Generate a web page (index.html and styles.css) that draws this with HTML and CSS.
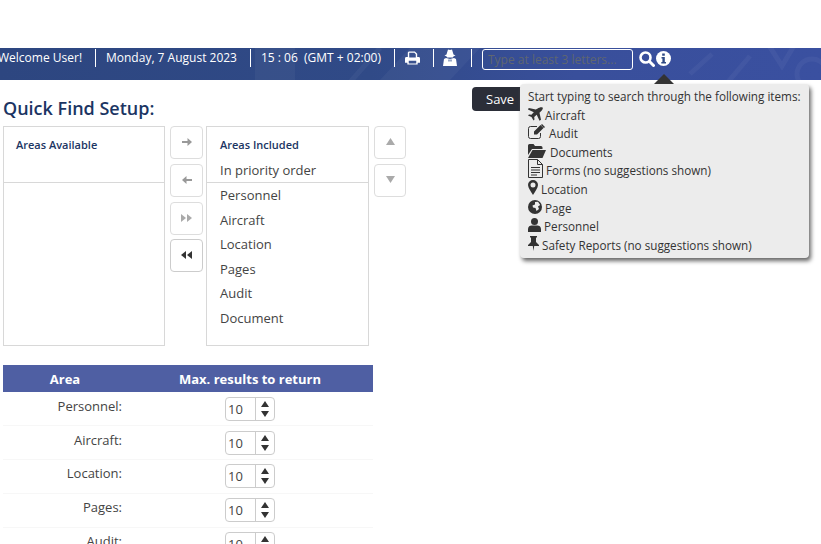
FILE: index.html
```html
<!DOCTYPE html>
<html lang="en">
<head>
<meta charset="utf-8">
<title>Quick Find Setup</title>
<link rel="stylesheet" href="styles.css">
</head>
<body>
<header class="topbar">
  <svg class="bar-art" width="821" height="32" viewBox="0 0 821 32"><g fill="none" stroke="#fff" stroke-opacity=".045" stroke-width="5"><path d="M380 0 345 40"/><path d="M690 26 712 6"/><path d="M728 34 750 8"/><path d="M768 -4 782 18 795 -4"/><circle cx="812" cy="26" r="15"/></g><path fill="#fff" fill-opacity=".04" d="M410 0h70l-30 32h-70zM255 0h40v32h-40z"/></svg>
  <span class="bar-item bar-welcome">Welcome User!</span>
  <span class="bar-item bar-date">Monday, 7 August 2023</span>
  <span class="bar-item bar-time">15 : 06&nbsp; (GMT + 02:00)</span>
  <span class="bar-item bar-icon">
    <svg width="16" height="14" viewBox="0 0 16 14"><path fill="#fff" fill-rule="evenodd" d="M4 0h6.500L13 2.500V6h1.500A1.500 1.500 0 0 1 16 7.500V12h-2.500v2h-11v-2H0V7.500A1.500 1.500 0 0 1 1.500 6H3V1zM4.500 1.500V6.500h7V3L10 1.500zM4 10v2.800h8V10z"/></svg>
  </span>
  <span class="bar-item bar-icon bar-spy">
    <svg width="14" height="17" viewBox="0 0 14 17"><path fill="#fff" d="M5 .5 7 1l2-.5 1.500 5 2 1-1.800.8-1 1.200H4.300l-1-1.200L1.500 6.500l2-1zM3 9l4 1 4-1 2 1 1 7H0l1-7z"/><path fill="#34508c" d="M5.500 10.500h1v1.500l-.5 1-.5-1zM7.500 10.500h1V12l-.5 1-.5-1z"/></svg>
  </span>
  <input class="search" type="text" placeholder="Type at least 3 letters...">
  <svg class="search-icon" width="16" height="16" viewBox="0 0 16 16"><circle cx="6.500" cy="6.500" r="5" fill="none" stroke="#fff" stroke-width="2.600"/><path stroke="#fff" stroke-width="3" stroke-linecap="round" d="M10.500 10.500 14.500 14.500"/></svg>
  <svg class="info-icon" width="15" height="15" viewBox="0 0 15 15"><circle cx="7.500" cy="7.500" r="7.500" fill="#fff"/><path fill="#2f4a85" d="M6.200 2.500h2.600v2.200H6.200zM5.500 6h3.300v5H10v1.500H5.300V11h1.100V7.500H5.500z"/></svg>
</header>

<main class="page">
  <div class="head-row">
    <h1 class="title">Quick Find Setup:</h1>
    <button class="save" type="button">Save</button>
  </div>

  <div class="picker">
    <section class="list">
      <div class="list-head"><strong>Areas Available</strong></div>
    </section>

    <div class="btn-stack">
      <button class="tool" type="button"><svg width="10" height="8" viewBox="0 0 10 8"><path fill="#999" d="M0 3h5.500V0L10 4 5.500 8V5H0z"/></svg></button>
      <button class="tool" type="button"><svg width="10" height="8" viewBox="0 0 10 8"><path fill="#999" d="M10 3H4.500V0L0 4l4.500 4V5H10z"/></svg></button>
      <button class="tool" type="button"><svg width="11" height="8" viewBox="0 0 11 8"><path fill="#aaa" d="M0 0l5 4-5 4zM6 0l5 4-5 4z"/></svg></button>
      <button class="tool" type="button"><svg width="11" height="8" viewBox="0 0 11 8"><path fill="#333" d="M5 0v8L0 4zM11 0v8L6 4z"/></svg></button>
    </div>

    <section class="list">
      <div class="list-head">
        <strong>Areas Included</strong>
        <span class="list-sub">In priority order</span>
      </div>
      <ul class="items">
        <li>Personnel</li>
        <li>Aircraft</li>
        <li>Location</li>
        <li>Pages</li>
        <li>Audit</li>
        <li>Document</li>
      </ul>
    </section>

    <div class="btn-stack">
      <button class="tool tool-narrow" type="button"><svg width="9" height="7" viewBox="0 0 9 7"><path fill="#aaa" d="M4.500 0 9 7H0z"/></svg></button>
      <button class="tool tool-narrow" type="button"><svg width="9" height="7" viewBox="0 0 9 7"><path fill="#aaa" d="M0 0h9L4.500 7z"/></svg></button>
    </div>
  </div>

  <table class="limits">
    <thead>
      <tr><th class="col-area">Area</th><th>Max. results to return</th></tr>
    </thead>
    <tbody>
      <tr><td class="row-label">Personnel:</td><td class="row-spin"><span class="spin"><span class="spin-val">10</span><span class="spin-arrows"><i class="up"></i><i class="down"></i></span></span></td></tr>
      <tr><td class="row-label">Aircraft:</td><td class="row-spin"><span class="spin"><span class="spin-val">10</span><span class="spin-arrows"><i class="up"></i><i class="down"></i></span></span></td></tr>
      <tr><td class="row-label">Location:</td><td class="row-spin"><span class="spin"><span class="spin-val">10</span><span class="spin-arrows"><i class="up"></i><i class="down"></i></span></span></td></tr>
      <tr><td class="row-label">Pages:</td><td class="row-spin"><span class="spin"><span class="spin-val">10</span><span class="spin-arrows"><i class="up"></i><i class="down"></i></span></span></td></tr>
      <tr><td class="row-label">Audit:</td><td class="row-spin"><span class="spin"><span class="spin-val">10</span><span class="spin-arrows"><i class="up"></i><i class="down"></i></span></span></td></tr>
    </tbody>
  </table>
</main>

<div class="tip-arrow"></div>
<aside class="tip">
  <div class="tip-row">Start typing to search through the following items:</div>
  <div class="tip-row"><svg class="ic ic-plane" width="15" height="14" viewBox="0 0 15 14"><path fill="#333" d="M14.500.5c.8.800-.1 2.400-1 3.300L11.500 5.700l1.500 7-1.500 1-2.800-6-2.500 2.400.3 2.400-1 1L3.500 10 0 8.500l1-1 2.400.3 2.400-2.500-6-2.800 1-1.500 7 1.500L9.700 1.500C10.600.6 13.700-.3 14.500.5z"/></svg> Aircraft</div>
  <div class="tip-row"><svg class="ic ic-audit" width="17" height="15" viewBox="0 0 17 15"><path fill="none" stroke="#333" d="M12.500 9v3.500a2 2 0 0 1-2 2h-8a2 2 0 0 1-2-2v-8a2 2 0 0 1 2-2H9"/><path fill="#333" d="M6 7.500 12.500 1l3 3L9 10.500H6zM14 0l3 3-1 1-3-3z"/></svg> Audit</div>
  <div class="tip-row"><svg class="ic ic-docs" width="18" height="14" viewBox="0 0 18 14"><path fill="#333" d="M0 1.500A1.500 1.500 0 0 1 1.500 0h4L7 2h6a1.500 1.500 0 0 1 1.500 1.500V5H4L0 11zM4.500 6H18l-3.500 8H0z"/></svg> Documents</div>
  <div class="tip-row"><svg class="ic ic-form" width="15" height="19" viewBox="0 0 15 19"><path fill="none" stroke="#333" d="M.5.500h9l5 5v13H.5zM9.500.500v5h5"/><path stroke="#333" d="M3 8.500h9M3 11h9M3 13.500h9M3 16h6"/></svg> Forms (no suggestions shown)</div>
  <div class="tip-row"><svg class="ic" width="10" height="15" viewBox="0 0 10 15"><path fill="#333" fill-rule="evenodd" d="M5 0a5 5 0 0 1 5 5c0 3-3 6.500-5 10C3 11.500 0 8 0 5a5 5 0 0 1 5-5zm0 2.500a2.500 2.500 0 1 0 0 5 2.500 2.500 0 0 0 0-5z"/></svg> Location</div>
  <div class="tip-row"><svg class="ic" width="14" height="14" viewBox="0 0 14 14"><circle cx="7" cy="7" r="7" fill="#333"/><path fill="#ececec" d="M7 2 10 1.800 12.200 5 10 6.500 11 9 8.500 11 7.500 8 5 7.500 4.500 5.500 7 4.500z"/></svg> Page</div>
  <div class="tip-row"><svg class="ic" width="13" height="14" viewBox="0 0 13 14"><circle cx="6.500" cy="3.500" r="3.500" fill="#333"/><path fill="#333" d="M0 14v-3c0-2.500 2-3.500 3.500-3.500h6C11 7.500 13 8.500 13 11v3z"/></svg> Personnel</div>
  <div class="tip-row"><svg class="ic" width="11" height="15" viewBox="0 0 11 15"><path fill="#333" d="M2 0h7v1.500H8V6l3 3v1H6.200L5.500 15 4.800 10H0V9l3-3V1.500H2z"/></svg> Safety Reports (no suggestions shown)</div>
</aside>
</body>
</html>
```

FILE: styles.css
```css
* { box-sizing: border-box; }
html, body {
  margin: 0;
  height: 544px;
  overflow: hidden;
  background: #fff;
  font-family: "Open Sans", sans-serif;
  color: #333;
}
.topbar {
  position: relative;
  margin-top: 48px;
  height: 32px;
  display: flex;
  align-items: flex-start;
  padding-top: 1px;
  color: #fff;
  font-size: 12px;
  background: linear-gradient(90deg, #2d4680 0%, #304a87 45%, #394f9b 70%, #3a50a0 100%);
}
.bar-art { position: absolute; left: 0; top: 0; }
.bar-item {
  position: relative;
  height: 18px;
  line-height: 18px;
  padding: 0 13px 0 10px;
  border-right: 1px solid #fff;
  white-space: nowrap;
}
.bar-welcome { margin-left: -2px; padding-left: 0; width: 98px; }
.bar-date { width: 155px; }
.bar-time { width: 144px; }
.bar-icon { display: flex; align-items: center; width: 39px; padding-left: 10px; }
.bar-spy { width: 38px; padding-left: 9px; }
.bar-spy svg { margin-top: -2px; }
.search {
  position: relative;
  width: 151px;
  height: 21px;
  margin: 0 0 0 10px;
  padding: 0 5px;
  background: transparent;
  border: 1px solid #fff;
  border-radius: 3px;
  font: 12px "Open Sans", sans-serif;
}
.search::placeholder { color: #5f6670; opacity: 1; }
.search-icon { position: relative; margin: 2px 0 0 6px; flex: none; }
.info-icon { position: relative; margin: 2px 0 0 1px; flex: none; }

.page { padding: 0 0 0 3px; }
.head-row {
  display: flex;
  align-items: flex-start;
  height: 46px;
}
.title {
  width: 469px;
  margin: 15px 0 0;
  font-size: 18px;
  line-height: 26px;
  font-weight: 600;
  color: #1b3563;
}
.save {
  margin-top: 7px;
  width: 60px;
  height: 24px;
  padding: 0 0 0 14px;
  text-align: left;
  background: #2b2e38;
  color: #fff;
  border: 0;
  border-radius: 4px;
  font: 13px "Open Sans", sans-serif;
}
.picker { display: flex; align-items: flex-start; height: 220px; }
.list {
  width: 162px;
  height: 220px;
  border: 1px solid #d8d8d8;
}
.list + .btn-stack { margin: 0 3px 0 5px; }
.btn-stack + .list { width: 163px; }
.list-head {
  height: 56px;
  padding: 10px 12px 0 12px;
  border-bottom: 1px solid #d8d8d8;
  display: flex;
  flex-direction: column;
}
.btn-stack + .list .list-head { padding-left: 13px; }
.list-head strong {
  font-size: 11px;
  line-height: 15px;
  font-weight: 600;
  color: #1b3563;
}
.list-sub { font-size: 13px; line-height: 18px; margin-top: 9px; color: #444; }
.items {
  list-style: none;
  margin: 0;
  padding: 0 0 0 13px;
  font-size: 13px;
  color: #444;
}
.items li { height: 24.600px; line-height: 24.600px; }
.btn-stack { display: flex; flex-direction: column; }
.tool {
  width: 33px;
  height: 33px;
  margin-bottom: 5px;
  padding: 0 0 2px;
  display: flex;
  align-items: center;
  justify-content: center;
  background: #fff;
  border: 1px solid #ddd;
  border-radius: 4px;
}
.btn-stack:nth-child(2) .tool:nth-child(4) { margin-top: -1px; border-color: #ccc; }
.btn-stack:last-child { margin-left: 5px; }
.tool-narrow { width: 32px; }

.limits {
  width: 370px;
  margin-top: 19px;
  border-collapse: collapse;
  font-size: 13px;
  color: #444;
  table-layout: fixed;
}
.limits th {
  height: 27px;
  padding: 0;
  background: #4f5fa3;
  color: #fff;
  font-size: 13px;
  font-weight: 700;
}
.limits th.col-area { width: 124px; }
.limits tbody tr { height: 33.800px; border-bottom: 1px solid #f7f7f7; }
.row-label { padding: 0 5px 6px 0; text-align: right; }
.row-spin { padding: 0 0 0 98px; }
.spin {
  display: flex;
  width: 50px;
  height: 24px;
  border: 1px solid #ccc;
  border-radius: 4px;
  background: #fff;
}
.spin-val {
  width: 30px;
  padding: 2px 0 0 2px;
  border-right: 1px solid #ccc;
  font-size: 13px;
  line-height: 18px;
}
.spin-arrows {
  flex: 1;
  display: flex;
  flex-direction: column;
  align-items: center;
  justify-content: center;
  gap: 4px;
}
.spin-arrows i { width: 0; height: 0; border-left: 4px solid transparent; border-right: 4px solid transparent; }
.spin-arrows .up { border-bottom: 6px solid #333; }
.spin-arrows .down { border-top: 6px solid #333; }

.tip-arrow {
  position: absolute;
  left: 654px;
  top: 74px;
  width: 0;
  height: 0;
  border-left: 10px solid transparent;
  border-right: 10px solid transparent;
  border-bottom: 10px solid #333;
}
.tip {
  position: absolute;
  left: 520px;
  top: 84px;
  width: 289px;
  height: 174px;
  padding: 3px 8px;
  background: #ececec;
  border-radius: 4px;
  box-shadow: 2px 3px 4px #666;
  font-size: 11.700px;
  color: #333;
  white-space: nowrap;
}
.tip-row { height: 18.600px; line-height: 18.600px; }
.ic { vertical-align: -1px; }
.ic-plane { margin-right: -1px; }
.ic-audit { margin-right: 1px; }
.ic-docs { margin-right: 1px; }
.ic-form { vertical-align: -3px; margin-top: -3px; }
```
